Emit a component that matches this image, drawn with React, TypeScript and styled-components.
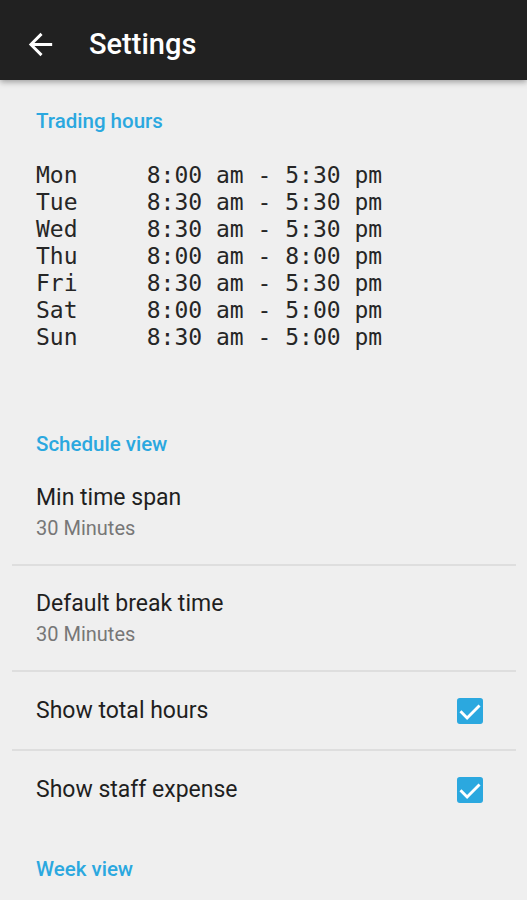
import styled, { createGlobalStyle } from "styled-components";

const hours = [
  { day: "Mon", time: "8:00 am - 5:30 pm" },
  { day: "Tue", time: "8:30 am - 5:30 pm" },
  { day: "Wed", time: "8:30 am - 5:30 pm" },
  { day: "Thu", time: "8:00 am - 8:00 pm" },
  { day: "Fri", time: "8:30 am - 5:30 pm" },
  { day: "Sat", time: "8:00 am - 5:00 pm" },
  { day: "Sun", time: "8:30 am - 5:00 pm" },
];

const GlobalStyle = createGlobalStyle`
  html, body {
    margin: 0;
    padding: 0;
    background: #efefef;
  }
  body {
    font-family: Roboto, "Noto Sans", sans-serif;
    -webkit-font-smoothing: antialiased;
  }
`;

const BackIcon = () => (
  <svg width="35" height="35" viewBox="0 0 24 24">
    <path
      fill="#ffffff"
      d="M20 11H7.83l5.59-5.59L12 4l-8 8 8 8 1.41-1.41L7.83 13H20v-2z"
    />
  </svg>
);

const CheckBox = () => (
  <svg width="26" height="26" viewBox="0 0 18 18">
    <rect x="0" y="0" width="18" height="18" rx="2" fill="#2ba8df" />
    <path
      d="M2.4 9.2l4.6 4.6 8.6-8.6"
      fill="none"
      stroke="#ffffff"
      strokeWidth="2"
    />
  </svg>
);

const App = () => {
  return (
    <Page>
      <GlobalStyle />
      <Toolbar>
        <BackButton>
          <BackIcon />
        </BackButton>
        <ToolbarTitle>Settings</ToolbarTitle>
      </Toolbar>

      <SectionTitle>Trading hours</SectionTitle>
      <HoursBlock>
        {hours.map((h) => (
          <HoursLine key={h.day}>{h.day.padEnd(8, " ") + h.time}</HoursLine>
        ))}
      </HoursBlock>

      <SectionTitle>Schedule view</SectionTitle>
      <Row>
        <Primary>Min time span</Primary>
        <Summary>30 Minutes</Summary>
      </Row>
      <Divider />
      <Row>
        <Primary>Default break time</Primary>
        <Summary>30 Minutes</Summary>
      </Row>
      <Divider />
      <CheckRow>
        <Primary>Show total hours</Primary>
        <CheckBox />
      </CheckRow>
      <Divider />
      <CheckRow>
        <Primary>Show staff expense</Primary>
        <CheckBox />
      </CheckRow>

      <SectionTitle>Week view</SectionTitle>
    </Page>
  );
};

const Page = styled.div`
  width: 527px;
  height: 900px;
  overflow: hidden;
  background: #efefef;
`;

const Toolbar = styled.div`
  position: relative;
  z-index: 2;
  height: 80px;
  box-sizing: border-box;
  padding: 8px 0 0 23px;
  background: #212121;
  display: flex;
  align-items: center;
  gap: 31px;
  box-shadow: 0 2px 6px rgba(0, 0, 0, 0.35);
`;

const BackButton = styled.div`
  width: 35px;
  height: 35px;
  display: flex;
`;

const ToolbarTitle = styled.div`
  color: #ffffff;
  font-size: 29px;
  font-weight: 500;
  line-height: 36px;
`;

const SectionTitle = styled.div`
  padding: 29px 36px 4px;
  color: #2ba8df;
  font-size: 20.5px;
  font-weight: 500;
  line-height: 24px;
`;

const HoursBlock = styled.div`
  padding: 25px 36px 52px;
`;

const HoursLine = styled.div`
  font-family: "DejaVu Sans Mono", "Liberation Mono", monospace;
  font-size: 23px;
  line-height: 27px;
  color: #262626;
  white-space: pre;
`;

const Row = styled.div`
  padding: 24px 36px 22px;
`;

const CheckRow = styled.div`
  height: 77px;
  padding: 0 44px 0 36px;
  display: flex;
  align-items: center;
  justify-content: space-between;
`;

const Primary = styled.div`
  color: #1f1f1f;
  font-size: 23px;
  line-height: 28px;
`;

const Summary = styled.div`
  margin-top: 2px;
  color: #777777;
  font-size: 20px;
  line-height: 28px;
`;

const Divider = styled.div`
  height: 2px;
  margin: 0 11px 0 12px;
  background: #dedede;
`;

export default App;
